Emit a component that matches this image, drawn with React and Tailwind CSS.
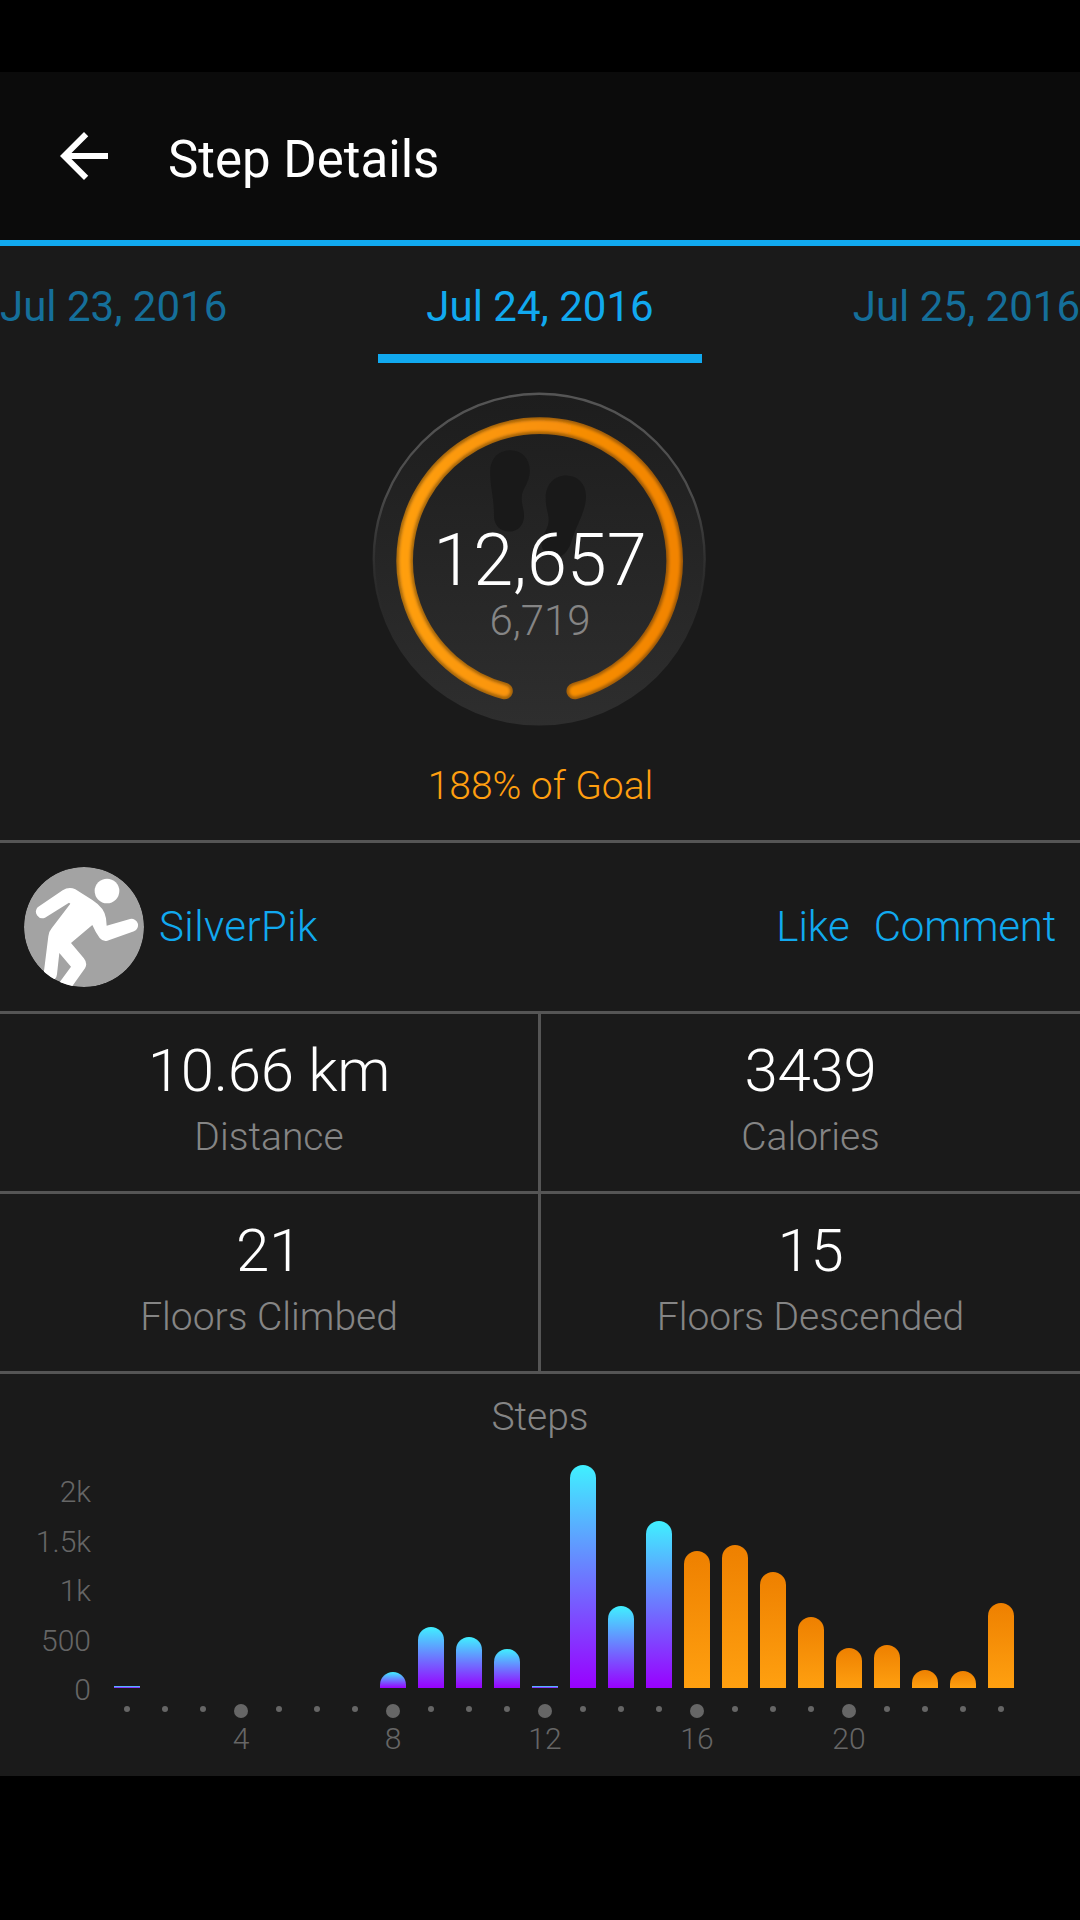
import React, { useState } from "react"

const dates = ["Jul 23, 2016", "Jul 24, 2016", "Jul 25, 2016"]

const stats = [
  { value: "10.66 km", label: "Distance" },
  { value: "3439", label: "Calories" },
  { value: "21", label: "Floors Climbed" },
  { value: "15", label: "Floors Descended" },
]

// bar heights in px, one per hour of the day
const hours = [2, 0, 0, 0, 0, 0, 0, 16, 61, 51, 39, 2, 223, 82, 167, 137, 143, 116, 71, 40, 43, 18, 17, 85]

// the goal was reached during this hour, later bars are orange
const GOAL_HOUR = 16

const scale = ["2k", "1.5k", "1k", "500", "0"]

const Header = () => (
  <header className="flex items-center gap-12 h-[174px] pl-12 bg-[#0b0b0b] border-b-6 border-[#11a9ef]">
    <button aria-label="Back">
      <svg viewBox="0 0 24 24" className="w-18 h-18" fill="#fff">
        <path d="M20 11H7.83l5.59-5.59L12 4l-8 8 8 8 1.41-1.41L7.83 13H20z" />
      </svg>
    </button>
    <h1 className="pt-[7px] text-[51px] leading-[60px] font-normal text-white">Step Details</h1>
  </header>
)

const DateTabs = () => {
  const [active, setActive] = useState(1)

  return (
    <nav className="grid grid-cols-[378px_324px_378px] h-[117px]">
      {dates.map((date, i) => (
        <button
          key={date}
          onClick={() => setActive(i)}
          className={`pt-[37px] flex text-[42px] leading-12 whitespace-nowrap border-b-9 ${
            i === active ? "text-[#11a9ef] border-[#11a9ef]" : "text-[#156f9a] border-transparent"
          } ${i === 0 ? "justify-start" : i === 1 ? "justify-center" : "justify-end"}`}
        >
          {date}
        </button>
      ))}
    </nav>
  )
}

const GoalRing = () => (
  <div className="relative w-[344px] h-[344px]">
    <svg viewBox="0 0 344 344" className="w-full h-full">
      <defs>
        <linearGradient id="disc" x1="0" y1="0" x2="0" y2="1">
          <stop offset="0" stopColor="#1d1d1d" />
          <stop offset="1" stopColor="#2e2e2e" />
        </linearGradient>
        <linearGradient id="rim" x1="0" y1="0" x2="0" y2="1">
          <stop offset="0" stopColor="#555" />
          <stop offset="0.3" stopColor="#4c4c4c" />
          <stop offset="0.7" stopColor="#2a2a2a" stopOpacity="0" />
        </linearGradient>
        <linearGradient id="ring" gradientUnits="userSpaceOnUse" x1="29" y1="0" x2="315" y2="0">
          <stop offset="0" stopColor="#ff9f10" />
          <stop offset="1" stopColor="#f28300" />
        </linearGradient>
        <linearGradient id="ringEdge" gradientUnits="userSpaceOnUse" x1="29" y1="0" x2="315" y2="0">
          <stop offset="0" stopColor="#a5680f" />
          <stop offset="1" stopColor="#9a5606" />
        </linearGradient>
        <filter id="soft" filterUnits="userSpaceOnUse" x="0" y="0" width="344" height="344">
          <feGaussianBlur stdDeviation="1.6" />
        </filter>
      </defs>
      <circle cx="171.2" cy="171.3" r="166.3" fill="url(#disc)" />
      <circle cx="171.2" cy="171.3" r="165.5" fill="none" stroke="url(#rim)" strokeWidth="2.4" />
      <g fill="#191919">
        <path d="M142.300 62.300C154 62.300 162 71 161.800 83C161.500 96 153.700 100 153.700 110C153.700 118 156 120 156 128C156 137 150 143.500 141.500 143.500C132 143.500 126 137 126 128C126 108 122.200 100 122.200 84C122.200 71 130 62.300 142.300 62.300Z" />
        <path d="M198.300 87.600C210 87.600 218.200 96 218 109C217.500 124 209 136 204.500 150C201 163 195 170 187 168.500C178 167 172.500 161 173.700 154C175 144 180.700 141 180.700 132C180.700 125 177.700 121 177.700 110C177.700 97 186 87.600 198.300 87.600Z" />
      </g>
      <path d="M136.500 303A135 135 0 1 1 206.800 303" fill="none" stroke="url(#ringEdge)" strokeWidth="16.600" strokeLinecap="round" />
      <path d="M136.500 303A135 135 0 1 1 206.800 303" fill="none" stroke="url(#ring)" strokeWidth="11.500" strokeLinecap="round" filter="url(#soft)" />
    </svg>
    <div className="absolute inset-0 pt-[137px] flex flex-col items-center font-light">
      <span className="text-[72px] leading-[72px] text-white">12,657</span>
      <span className="mt-[3px] text-[42px] leading-[42px] text-[#858585]">6,719</span>
    </div>
  </div>
)

const Avatar = () => (
  <svg viewBox="42 36 360 360" className="w-30 h-30">
    <defs>
      <clipPath id="avatar">
        <circle cx="222" cy="216" r="180" />
      </clipPath>
    </defs>
    <g clipPath="url(#avatar)" fill="#fff">
      <circle cx="222" cy="216" r="180" fill="#a3a3a3" />
      <circle cx="291" cy="108" r="37" />
      <path d="M83 157L158 106Q177 93 196 103L247 135Q284 159 288 190L290 212L360 192A19.500 19.500 0 0 1 372 229L292 257Q278 260 269 249Q256 231 247 210L183 264L221 309Q234 325 225 340L175 410L140 394L183 335L148 294L141 358Q139 376 122 377Q101 374 102 348L115 244Q117 229 125 220L181 146L177 143L105 188A19.500 19.500 0 0 1 83 157Z" />
    </g>
  </svg>
)

const StepsChart = () => (
  <section className="pt-[19px] font-light">
    <h2 className="text-[39px] leading-12 text-center text-[#858585]">Steps</h2>
    <div className="flex text-[30px] text-[#666]">
      <div className="w-[91px] pt-[26px] text-right leading-[49.5px]">
        {scale.map((mark) => (
          <div key={mark}>{mark}</div>
        ))}
      </div>
      <div className="ml-[17px] flex">
        {hours.map((height, i) => {
          const hour = i + 1
          const major = hour % 4 === 0 && hour < 24
          return (
            <div key={hour} className="w-[38px] flex flex-col items-center">
              <div className="h-[247px] flex items-end">
                <div
                  className={`w-[26px] bg-linear-to-b/srgb ${height > 2 ? "rounded-t-[13px]" : ""} ${
                    hour < GOAL_HOUR ? "from-[#40f0ff] to-[#9900ff]" : "from-[#ee8000] to-[#ffa010]"
                  }`}
                  style={{ height }}
                />
              </div>
              <div className={`rounded-full bg-[#666] ${major ? "mt-4 w-3.5 h-3.5" : "mt-[18px] w-1.5 h-1.5"}`} />
              {major && <span className="mt-[3px] leading-9">{hour}</span>}
            </div>
          )
        })}
      </div>
    </div>
  </section>
)

const App = () => (
  <div className="w-[1080px] h-[1920px] py-18 bg-black overflow-hidden font-['Roboto',sans-serif]">
    <div className="h-[1704px] bg-[#1a1a1a]">
      <Header />
      <DateTabs />
      <section className="h-[480px] pt-[25px] flex flex-col items-center border-b-3 border-[#555]">
        <GoalRing />
        <p className="mt-[30px] pl-px text-[39px] leading-12 font-light text-[#ff9f10]">188% of Goal</p>
      </section>

      <section className="h-[171px] px-6 flex items-center border-b-3 border-[#555] text-[42px] leading-12 font-light text-[#11a9ef]">
        <Avatar />
        <span className="ml-[15px] tracking-[0.4px]">SilverPik</span>
        <div className="ml-auto flex gap-6">
          <button>Like</button>
          <button className="tracking-[-0.2px]">Comment</button>
        </div>
      </section>

      <section className="grid grid-cols-[541px_539px] font-light text-center">
        {stats.map((stat) => (
          <div key={stat.label} className="h-[180px] pt-[21px] border-b-3 odd:border-r-3 border-[#555]">
            <div className="text-[60px] leading-[72px] tracking-[-0.3px] text-white">{stat.value}</div>
            <div className="mt-1.5 text-[39px] leading-12 text-[#858585]">{stat.label}</div>
          </div>
        ))}
      </section>

      <StepsChart />
    </div>
  </div>
)

export default App
